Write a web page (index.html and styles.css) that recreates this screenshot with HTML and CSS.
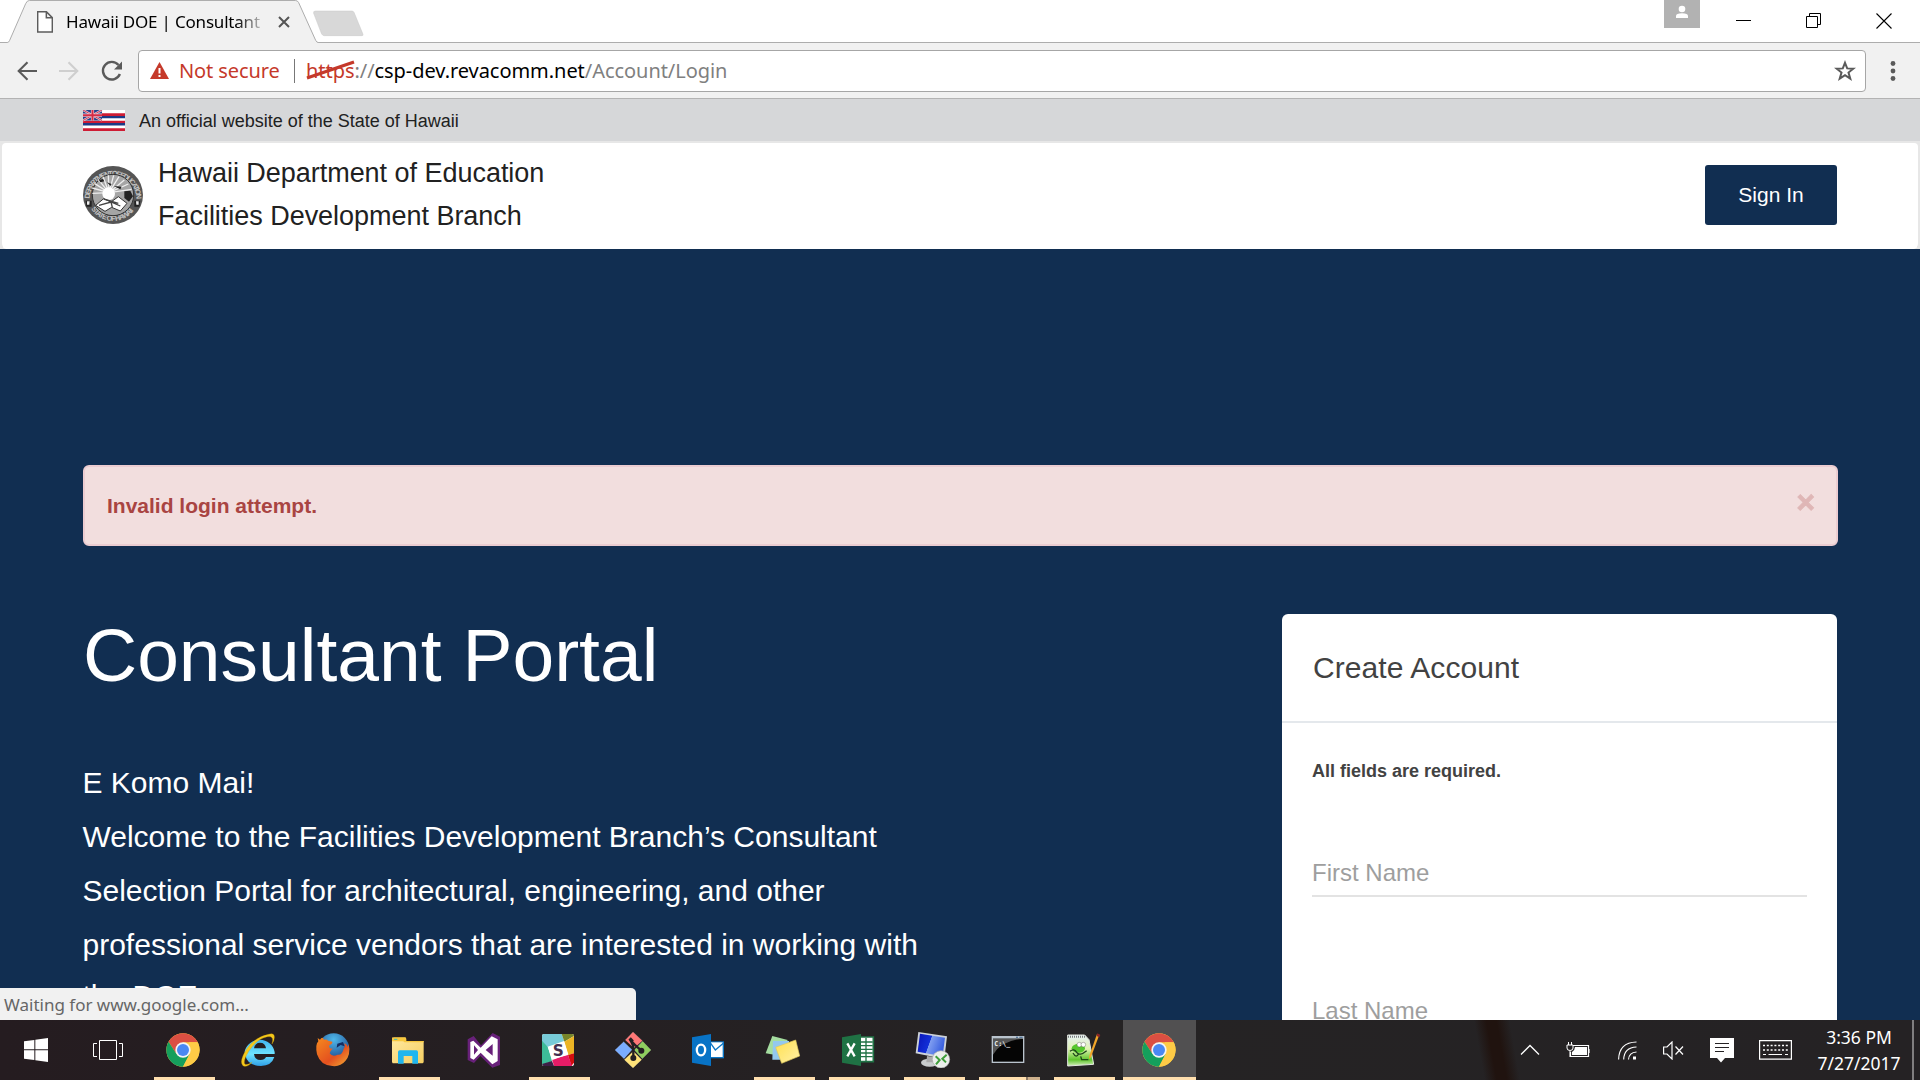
FILE: index.html
```html
<!DOCTYPE html>
<html lang="en">
<head>
<meta charset="utf-8">
<title>Hawaii DOE | Consultant Portal</title>
<link rel="stylesheet" href="styles.css">
</head>
<body>
<svg width="0" height="0" class="defs">
  <defs>
    <linearGradient id="ieBlue" x1="0" y1="0" x2="0" y2="1"><stop offset="0" stop-color="#3fb4f0"/><stop offset=".55" stop-color="#6fe3ff"/><stop offset="1" stop-color="#2f9fe6"/></linearGradient>
    <linearGradient id="foxOrange" x1="0" y1="0" x2="1" y2="1"><stop offset="0" stop-color="#f58a1f"/><stop offset=".6" stop-color="#e4501f"/><stop offset="1" stop-color="#f2b035"/></linearGradient>
    <radialGradient id="foxBlue" cx=".5" cy=".2" r=".8"><stop offset="0" stop-color="#4fb8ea"/><stop offset="1" stop-color="#14337a"/></radialGradient>
    <linearGradient id="folder" x1="0" y1="0" x2="1" y2="1"><stop offset="0" stop-color="#ffe9a0"/><stop offset="1" stop-color="#f5cf62"/></linearGradient>
    <linearGradient id="screen" x1="0" y1="0" x2="1" y2=".3"><stop offset="0" stop-color="#0a14b8"/><stop offset=".5" stop-color="#1230d8"/><stop offset=".52" stop-color="#7f9df0"/><stop offset="1" stop-color="#3c62e0"/></linearGradient>
    <linearGradient id="note" x1="0" y1="0" x2="1" y2="1"><stop offset="0" stop-color="#ffe04e"/><stop offset="1" stop-color="#fff0a8"/></linearGradient>
    <linearGradient id="grass" x1="0" y1="0" x2="0" y2="1"><stop offset="0" stop-color="#e6f0f8"/><stop offset=".45" stop-color="#dff2b0"/><stop offset=".8" stop-color="#5fc52c"/><stop offset="1" stop-color="#d8f0c0"/></linearGradient>
    <symbol id="chrome" viewBox="0 0 108 108">
      <circle cx="54" cy="54" r="50" fill="#fc4"/>
      <path d="M10.700 29A50 50 0 0 1 97.300 29L98 31H54L34 65Z" fill="#db4f42"/>
      <path d="M10.700 29A50 50 0 0 0 54 104L74 66L54 54L34 65Z" fill="#159f5c"/>
      <path d="M98 31A50 50 0 0 1 54 104L74 66L72 31Z" fill="#fecb46"/>
      <circle cx="54" cy="54" r="23" fill="#f4f4f4"/><circle cx="54" cy="54" r="18" fill="#4a88f3"/>
    </symbol>
  </defs>
</svg>

<header class="browser">
  <div class="strip">
    <div class="tab">
      <svg class="tab-shape" width="322" height="43" viewBox="0 0 966 129"><path d="M0 127.500H22Q27 127 29 121L77 11Q81 1.500 88 1.500H886Q893 1.500 896 8L947 121Q950 127.500 955 127.500V129H0Z" fill="#f1f1f1"/><path d="M0 127.500H22Q27 127 29 121L77 11Q81 1.500 88 1.500H886Q893 1.500 896 8L947 121Q950 127.500 955 127.500H966" fill="none" stroke="#adadad" stroke-width="3"/></svg>
      <svg class="favicon" width="16" height="22" viewBox="0 0 48 66"><path d="M2 2H28L46 20V63H2ZM28 3V20H45" fill="#fff" stroke="#5c5c5c" stroke-width="4.500"/></svg>
      <span class="tab-title">Hawaii DOE | Consultant</span>
      <svg class="tab-close" width="12" height="12" viewBox="0 0 12 12"><path d="M1 1L11 11M11 1L1 11" stroke="#555" stroke-width="2"/></svg>
    </div>
    <svg class="new-tab" width="52" height="27" viewBox="0 0 156 81"><path d="M8 3H116Q121 3 123 7L150 73Q151 77 147 77H34Q29 77 26 72L2 10Q0 3 8 3Z" fill="#d8d8d8" stroke="#c8c8c8" stroke-width="1.500"/></svg>
    <div class="window-buttons">
      <svg class="person" width="36" height="28" viewBox="0 0 36 28"><path d="M0 0H36V28H0Z" fill="#b2b2b2"/><circle cx="18" cy="9" r="3.300" fill="#fff"/><path d="M12 18V16Q12 13.300 18 13.300T24 16V18Z" fill="#fff"/></svg>
      <svg width="15" height="15" viewBox="0 0 15 15"><path d="M0 7.500H15" stroke="#000"/></svg>
      <svg width="15" height="15" viewBox="0 0 15 15"><path d="M.5 3.500H11.500V14.500H.5ZM3.500 3V.5H14.500V11.500H12" fill="none" stroke="#000"/></svg>
      <svg width="16" height="16" viewBox="0 0 16 16"><path d="M.5 .5L15.500 15.500M15.500 .5L.5 15.500" stroke="#000" stroke-width="1.100"/></svg>
    </div>
  </div>
  <div class="toolbar">
    <svg class="nav" width="20" height="20" viewBox="0 0 20 20"><path d="M20 10H2M10.500 1.200L1.700 10L10.500 18.800" fill="none" stroke="#5a5a5a" stroke-width="2.100"/></svg>
    <svg class="nav" width="20" height="20" viewBox="0 0 20 20"><path d="M0 10H18M9.500 1.200L18.300 10L9.500 18.800" fill="none" stroke="#cfcfcf" stroke-width="2.100"/></svg>
    <svg class="nav" width="22" height="22" viewBox="0 0 22 22"><path d="M17.500 5A8.800 8.800 0 1 0 18.900 14" fill="none" stroke="#5a5a5a" stroke-width="2.400"/><path d="M21 1.500V9.500H13Z" fill="#5a5a5a"/></svg>
    <div class="omnibox">
      <svg width="19" height="17" viewBox="0 0 19 17"><path d="M9.500 0L19 17H0Z" fill="#c5392a"/><path d="M9.500 6V11.500M9.500 13V15" stroke="#fff" stroke-width="2"/></svg>
      <span class="not-secure">Not secure</span>
      <span class="divider"></span>
      <span class="url"><span class="scheme">https<svg class="strike" width="50" height="20" viewBox="0 0 50 20"><path d="M1 18L48 2" stroke="#c5392a" stroke-width="3.200"/></svg></span><span class="dim">://</span>csp-dev.revacomm.net<span class="dim">/Account/Login</span></span>
      <svg class="star" width="22" height="22" viewBox="0 0 22 22"><path d="M11 2.800L13.200 8.400L19.300 8.700L14.500 12.500L16.300 18.700L11 15.200L5.700 18.700L7.500 12.500L2.700 8.700L8.800 8.400Z" fill="none" stroke="#5a5a5a" stroke-width="2"/></svg>
    </div>
    <svg class="menu" width="6" height="20" viewBox="0 0 6 20"><circle cx="3" cy="2.500" r="2.400"/><circle cx="3" cy="10" r="2.400"/><circle cx="3" cy="17.500" r="2.400"/></svg>
  </div>
</header>

<div class="page">
  <div class="official">
    <svg width="42" height="21" viewBox="0 0 42 21"><path d="M0 0H42V21H0Z" fill="#fff"/><path d="M0 3.300H42V5.900H0ZM0 10.700H42V13.100H0ZM0 18.300H42V21H0Z" fill="#ce1c34"/><path d="M0 5.900H42V8.200H0ZM0 13.100H42V15.600H0Z" fill="#1c3a86"/><path d="M0 0H19V10.500H0Z" fill="#23418c"/><path d="M0 0L19 10.500M19 0L0 10.500" stroke="#e8c8d4" stroke-width="2.200"/><path d="M0 0L19 10.500M19 0L0 10.500" stroke="#cc3350" stroke-width=".9"/><path d="M9.500 0V10.500M0 5.200H19" stroke="#eed3dc" stroke-width="3.200"/><path d="M9.500 0V10.500M0 5.200H19" stroke="#d52b45" stroke-width="2"/></svg>
    <span>An official website of the State of Hawaii</span>
  </div>
  <div class="masthead">
    <svg class="seal" width="60" height="58" viewBox="0 0 180 174">
      <ellipse cx="90" cy="87" rx="90" ry="87" fill="#555"/>
      <path id="arcTop" d="M20 98A70 68 0 1 1 160 98" fill="none"/><path id="arcLow" d="M17 112A76 73 0 0 0 163 112" fill="none"/>
      <g class="seal-text"><text><textPath href="#arcTop" textLength="218">DEPARTMENT OF EDUCATION</textPath></text><text><textPath href="#arcLow" startOffset="18" textLength="150">STATE OF HAWAII</textPath></text></g>
      <circle cx="90" cy="87" r="62" fill="#a5a5a5" stroke="#333" stroke-width="3"/>
      <path d="M78 80L34 52M78 80L46 41M78 80L60 32M78 80L76 28M78 80L92 28M78 80L108 32M78 80L124 42M78 80L136 54M78 80L146 70M78 80L28 66M78 80L28 82" stroke="#eee" stroke-width="4"/>
      <circle cx="77" cy="83" r="19" fill="#fff"/>
      <path d="M48 42L60 39L64 46L52 49ZM72 49L86 54L82 60ZM92 60L116 62L112 70ZM124 76L142 74L150 91L138 107L124 96Z" fill="#222"/>
      <path d="M38 118L62 98L84 108L106 92L132 112L112 135L86 124L66 136Z" fill="#fff" stroke="#333" stroke-width="3"/><path d="M48 118L84 108L112 120M84 108L88 124M62 99L106 112" fill="none" stroke="#444" stroke-width="4"/>
      <path d="M8 104H26V122H10ZM154 104H172L169 122H154Z" fill="#222"/><path d="M12 106H20L19 116H12ZM159 106H167V116H160Z" fill="#eee"/>
    </svg>
    <div class="agency"><div>Hawaii Department of Education</div><div>Facilities Development Branch</div></div>
    <button class="sign-in">Sign In</button>
  </div>
  <main class="hero">
    <div class="alert"><strong>Invalid login attempt.</strong><span class="dismiss">×</span></div>
    <div class="columns">
      <section class="intro">
        <h1>Consultant Portal</h1>
        <p>E Komo Mai!<br>Welcome to the Facilities Development Branch’s Consultant<br>Selection Portal for architectural, engineering, and other<br>professional service vendors that are interested in working with<span class="last-line">the DOE.</span></p>
      </section>
      <section class="card">
        <h2>Create Account</h2>
        <div class="form">
          <p>All fields are required.</p>
          <div class="field">First Name</div>
          <div class="field">Last Name</div>
        </div>
      </section>
    </div>
  </main>
  <div class="status">Waiting for www.google.com...</div>
</div>

<footer class="taskbar">
  <div class="sys"><svg width="24" height="24" viewBox="0 0 72 72"><path d="M0 10L31 6V34H0ZM34 5.500L72 0V34H34ZM0 37H31V66L0 62ZM34 37H72V72L34 66.500Z" fill="#fff"/></svg></div>
  <div class="sys"><svg width="30" height="22" viewBox="0 0 30 22"><path d="M6.500 1.500H23.500V20.500H6.500ZM4 4.500H.5V17.500H4M26 4.500H29.500V17.500H26" fill="none" stroke="#fff"/></svg></div>
  <div class="apps">
    <div class="app open"><svg width="36" height="36"><use href="#chrome"/></svg></div>
    <div class="app"><svg width="36" height="36" viewBox="0 0 108 108"><path d="M14 58A46 45 0 0 1 104 60V66H42Q44 84 62 84Q74 84 78 75H103Q95 101 63 102Q22 101 16 70ZM42 49H78Q76 32 60 32Q45 32 42 49Z" fill="url(#ieBlue)"/><path d="M86 7Q102 2 103 14Q104 24 96 36Q104 10 82 14Q50 20 26 58Q9 86 14 96Q20 101 36 91Q20 108 9 101Q-4 89 20 51Q45 15 86 7Z" fill="#f4c81c" stroke="#d9a400"/></svg></div>
    <div class="app"><svg width="36" height="36" viewBox="0 0 108 108"><circle cx="56" cy="51" r="47" fill="url(#foxBlue)"/><path d="M8 18Q12 22 15 23Q22 12 27 23Q36 21 39 26L52 29Q53 35 43 40Q41 48 45 49L53 50Q45 57 44 64Q52 76 68 68Q82 70 86 50Q91 46 88 34Q98 38 98 46L101 36Q108 68 91 87Q76 105 52 102Q17 101 6 67Q0 37 10 28Z" fill="url(#foxOrange)"/><path d="M67 35L84 30L89 43L77 39L65 47Z" fill="#142d63"/></svg></div>
    <div class="app open"><svg width="36" height="36" viewBox="0 0 108 108"><path d="M6 17H48V27H101V91L98 94H8L6 90Z" fill="url(#folder)"/><path d="M6 17Q8 16 12 16H46L49 20V27H101V31H43L40 28H6Z" fill="#f8c83f"/><path d="M12 22H22" stroke="#4bb" stroke-width="3"/><path d="M24 91V60Q24 55 29 55H79Q84 55 84 60V95H67V72H41V95H24Z" fill="#20b6ee"/></svg></div>
    <div class="app"><svg width="36" height="36" viewBox="0 0 108 108"><path d="M8 22L26 12L48 40L83 3L105 14V99L82 107L46 72L27 93L8 84Z" fill="#68217a"/><path d="M16 30L25 26L47 47L80 13L98 22V87L82 97L47 62L26 83L16 78ZM27 40V68L39 54ZM62 54L83 71V36Z" fill="#fff" fill-rule="evenodd"/></svg></div>
    <div class="app open"><svg width="36" height="36" viewBox="0 0 108 108"><rect x="6" y="6" width="96" height="96" rx="6" fill="#fff"/><path d="M6 12Q6 6 12 6H65L73 29L24 46L6 32Z" fill="#78cbd8"/><path d="M6 26L24 46L36 88L6 98Z" fill="#3dbc98"/><path d="M65 6H96Q102 6 102 12L73 29Z" fill="#77852a"/><path d="M73 29L102 12V64L84 69Z" fill="#ecb424"/><path d="M84 69L102 64V92L94 102Z" fill="#d20e0e"/><path d="M36 82L84 69L96 102H42Z" fill="#e61c67"/><path d="M6 96L36 87L42 102H10Z" fill="#3d1f46"/><path d="M23 44L72 27L85 67L37 84Z" fill="#fff"/><text x="38" y="71" class="slack-s">S</text></svg></div>
    <div class="app"><svg width="36" height="36" viewBox="0 0 108 108"><g stroke="#fff" stroke-opacity=".35"><path d="M54 0L82 26L57 48L31 24Z" fill="#f77"/><path d="M26 29L51 53L27 80L0 54Z" fill="#7aadff"/><path d="M83 28L108 54L82 80L58 54Z" fill="#8fce5f"/><path d="M55 58L80 83L54 108L28 83Z" fill="#ffe279"/></g><path d="M43 20Q57 38 55 55V78M44 20Q55 37 80 56M54 28L45 18" fill="none" stroke="#241f22" stroke-width="7"/><circle cx="55" cy="78" r="9" fill="#241f22"/><circle cx="79" cy="56" r="9" fill="#241f22"/></svg></div>
    <div class="app"><svg width="36" height="36" viewBox="0 0 108 108"><path d="M58 28H102V79H58Z" fill="#0b75c4"/><path d="M60 31H98V75H60Z" fill="#fff"/><path d="M60 31L76 54L100 34" fill="none" stroke="#0b75c4" stroke-width="4"/><path d="M6 16L63 6V102L6 92Z" fill="#0873c6"/><ellipse cx="33" cy="54" rx="12.500" ry="16" fill="none" stroke="#fff" stroke-width="7"/></svg></div>
    <div class="app open"><svg width="36" height="36" viewBox="0 0 108 108"><path d="M22 12L68 24L49 72L2 64Z" fill="#a5dda0"/><path d="M24 27H72V83H22Z" fill="#93c8ef"/><path d="M32 46L92 24L104 72L50 94Z" fill="url(#note)" stroke="#e0c85a" stroke-width="2"/></svg></div>
    <div class="app open"><svg width="36" height="36" viewBox="0 0 108 108"><path d="M58 15H100V89H58Z" fill="#fff" stroke="#207245" stroke-width="5"/><path d="M58 30H98M58 41H98M58 52H98M58 63H98M58 74H98M78 18V87" stroke="#207245" stroke-width="4"/><path d="M6 16L63 6V102L6 92Z" fill="#1f7244"/><path d="M22 34L44 73M44 34L22 73" stroke="#fff" stroke-width="7"/></svg></div>
    <div class="app open"><svg width="36" height="36" viewBox="0 0 108 108"><ellipse cx="44" cy="92" rx="26" ry="12" fill="#c9cccd"/><path d="M36 72L60 76V91H34Z" fill="#aaa"/><path d="M10 0L96 13L88 81L2 64Z" fill="#cdd2d8"/><path d="M15 5L90 17L83 73L8 59Z" fill="url(#screen)"/><circle cx="78" cy="82" r="26" fill="#ecefeb" stroke="#aaa" stroke-width="2"/><path d="M62 73L74 84L63 97M95 68L82 80L93 91" fill="none" stroke="#3f9e3a" stroke-width="6"/></svg></div>
    <div class="app open stacked"><svg width="36" height="36" viewBox="0 0 108 108"><path d="M5 12H103V93H5Z" fill="#b9c3cd"/><path d="M9 20H99V89H9Z" fill="#050505"/><path d="M9 20H99Q33 26 9 68Z" fill="#555"/><path d="M78 14H84V17H78ZM88 14H98V17H88Z" fill="#39608a"/><text x="13" y="41" class="cmd-text">C:\_</text></svg></div>
    <div class="app open"><svg width="36" height="36" viewBox="0 0 108 108"><path d="M8 9H59L72 23L86 97L8 102Z" fill="url(#grass)" stroke="#e4e8e0" stroke-width="3"/><path d="M10 14H62" stroke="#444" stroke-width="6" stroke-dasharray="2 4"/><ellipse cx="40" cy="49" rx="20" ry="13" fill="#56c72e"/><circle cx="43" cy="38" r="7" fill="#fff" stroke="#333"/><circle cx="55" cy="38" r="7" fill="#fff" stroke="#333"/><path d="M15 58Q27 48 35 61T65 56M24 63Q34 81 42 64M47 73L50 83H70" fill="none" stroke="#1d451a" stroke-width="4"/><path d="M103 8L78 75L72 82L73 71L96 6Z" fill="#f2a62a"/><path d="M97 4L106 9L103 16L95 12Z" fill="#8b2425"/></svg></div>
    <div class="app open active"><svg width="36" height="36"><use href="#chrome"/></svg></div>
  </div>
  <div class="tray">
    <svg class="chevron" width="20" height="12" viewBox="0 0 20 12"><path d="M1 10.500L10 1.500L19 10.500" fill="none" stroke="#fff" stroke-width="1.300"/></svg>
    <svg class="battery" width="24" height="18" viewBox="0 0 24 18"><path d="M7 4.500H22.500V15.500H4.500V11M23 8V12" fill="none" stroke="#fff" stroke-width="1.200"/><path d="M9 6H21V14H6V11Q9 9 9 6Z" fill="#fff"/><path d="M1 4V7Q1 9.500 4 9.500T7 7V4ZM2.500 1V4M5.500 1V4M4 10V16" fill="#252224" stroke="#fff"/></svg>
    <svg class="wifi" width="19" height="19" viewBox="0 0 19 19"><path d="M.6 18.500Q1 1.500 18.500 1M5.700 18.500Q6 6.500 18.500 6M10.500 18.500Q11 11.500 18.500 11" fill="none" stroke="#fff" stroke-width="1.100"/><path d="M15 15.500H18V18.500H15Z" fill="#fff"/></svg>
    <svg class="volume" width="21" height="19" viewBox="0 0 21 19"><path d="M.6 6V13H4L9 18V1L4 6ZM12.500 5.500L20 13.500M20 5.500L12.500 13.500" fill="none" stroke="#fff" stroke-width="1.200"/></svg>
    <svg class="message" width="24" height="25" viewBox="0 0 24 25"><path d="M0 0H24V20H15L11 24.500L7 20H0Z" fill="#fff"/><path d="M5 5.500H19M5 9.500H19M5 13.500H14" stroke="#252224" stroke-width="1.100"/></svg>
    <svg class="keyboard" width="33" height="20" viewBox="0 0 33 20"><path d="M.6 .6H32.400V19.200H.6Z" fill="none" stroke="#fff" stroke-width="1.200"/><path d="M4 5.500H30M4 10H30" stroke="#fff" stroke-width="1.300" stroke-dasharray="2 1.800"/><path d="M4 14.500H7M9.500 14.500H23M26 14.500H29" stroke="#fff"/></svg>
    <div class="clock"><span>3:36 PM</span><span>7/27/2017</span></div>
    <span class="peek"></span>
  </div>
</footer>
</body>
</html>
```
FILE: styles.css
```css
* { box-sizing: border-box; }
body {
  margin: 0;
  width: 1920px;
  height: 1080px;
  overflow: hidden;
  display: flex;
  flex-direction: column;
  font-family: "Liberation Sans", Arial, sans-serif;
  background: #112e51;
}
svg { display: block; flex: none; }
.defs { position: absolute; }

/* Browser chrome */
.browser { font-family: "Noto Sans", "Open Sans", sans-serif; flex: none; }
.strip {
  height: 43px;
  display: flex;
  background: #fff;
  border-bottom: 1px solid #adadad;
}
.tab {
  position: relative;
  width: 313px;
  height: 43px;
  display: flex;
  align-items: center;
  padding-left: 37px;
}
.tab-shape { position: absolute; left: 0; top: 0; }
.favicon, .tab-title, .tab-close { position: relative; }
.tab-title {
  margin-left: 13px;
  width: 195px;
  font-size: 17px;
  letter-spacing: -0.2px;
  white-space: nowrap;
  color: #000;
  -webkit-mask-image: linear-gradient(90deg, #000 170px, transparent 202px);
  mask-image: linear-gradient(90deg, #000 170px, transparent 202px);
}
.tab-close { margin-left: 17px; }
.new-tab { margin-top: 10px; }
.window-buttons { margin-left: auto; display: flex; padding-right: 29px; }
.window-buttons svg { margin: 13px 0 0 54px; }
.window-buttons svg:nth-child(2) { margin-right: 1px; }
.window-buttons svg:nth-child(4) { margin-left: 55px; margin-right: -1px; }
.window-buttons svg.person { margin: 0 -18px 0 0; }
.toolbar {
  height: 56px;
  display: flex;
  align-items: center;
  padding: 0 24px 0 17px;
  background: #f1f1f1;
  border-bottom: 1px solid #b3b3b3;
}
.nav { margin-right: 22px; }
.nav + .nav + .nav { margin: 0 15px 0 0; }
.omnibox {
  width: 1728px;
  height: 42px;
  display: flex;
  align-items: center;
  padding: 0 9px 0 11px;
  background: #fff;
  border: 1px solid #a6a6a6;
  border-radius: 4px;
  font-size: 20px;
  white-space: nowrap;
}
.not-secure { margin-left: 10px; width: 115px; color: #c5392a; letter-spacing: -0.1px; }
.divider { width: 1px; height: 24px; background: #777; margin-right: 11px; }
.url { color: #000; letter-spacing: -0.05px; }
.scheme { position: relative; color: #c5392a; }
.strike { position: absolute; left: 0; top: 3px; }
.dim { color: #808080; }
.star { margin-left: auto; }
.menu { margin-left: 24px; fill: #5a5a5a; }

/* Web page */
.page { position: relative; flex: 1; min-height: 0; overflow: hidden; }
.official {
  height: 42px;
  display: flex;
  align-items: center;
  gap: 14px;
  padding-left: 83px;
  background: #d6d7d9;
  color: #212121;
  font-size: 18px;
}
.official span { padding-top: 2px; }
.masthead {
  height: 108px;
  display: flex;
  align-items: center;
  padding: 0 81px;
  background: #fff;
  border: 2px solid #e7e7e7;
  border-bottom: 0;
  border-radius: 6px;
  box-shadow: 0 0 0 6px #e7e7e7;
  clip-path: inset(0);
  color: #212121;
}
.seal { margin-bottom: 2px; }
.seal-text { font-size: 22px; font-weight: bold; fill: #c4c4c4; }
.agency { margin: -3px 0 0 15px; font-size: 27px; line-height: 43px; letter-spacing: -0.03px; }
.sign-in {
  margin: 0 0 2px auto;
  width: 132px;
  height: 60px;
  border: 0;
  border-radius: 3px;
  background: #112e51;
  color: #fff;
  font: 21px "Liberation Sans", Arial, sans-serif;
}
.hero { padding: 216px 82px 0 83px; color: #fff; }
.alert {
  height: 81px;
  display: flex;
  justify-content: space-between;
  padding: 0 21px 0 22px;
  background: #f2dede;
  border: 2px solid #ebccd1;
  border-radius: 6px;
  color: #a94442;
  font-size: 21px;
  line-height: 77px;
}
.dismiss { font-size: 31.5px; font-weight: bold; line-height: 71px; opacity: .25; -webkit-text-stroke: 1px #a94442; }
.columns { display: flex; justify-content: space-between; margin-top: 64px; }
.intro h1 { margin: 0 0 56px; font-size: 75px; font-weight: normal; line-height: 90px; }
.intro p { margin: 0 0 0 -0.5px; font-size: 30px; line-height: 54px; white-space: nowrap; }
.last-line { display: block; margin-top: -3px; }
.card {
  width: 555px;
  height: 700px;
  margin: 4px 1px 0 0;
  background: #fff;
  border-radius: 6px;
  color: #424242;
}
.card h2 {
  margin: 0;
  height: 109px;
  padding: 36px 30px 0 31px;
  border-bottom: 2px solid #e4e8ec;
  font-size: 30px;
  font-weight: normal;
  line-height: 36px;
  letter-spacing: 0.08px;
}
.form { padding: 35px 30px 0; }
.form p { margin: 0 0 70px; font-size: 18px; font-weight: bold; line-height: 27px; }
.field {
  height: 42px;
  margin-bottom: 96px;
  border-bottom: 2px solid #e3e3e3;
  color: #9e9e9e;
  font-size: 24px;
  line-height: 36px;
}
.status {
  position: absolute;
  left: 0;
  bottom: 0;
  width: 636px;
  height: 32px;
  padding-left: 4px;
  background: #f1f1f1;
  border-radius: 0 5px 0 0;
  color: #666;
  font: 17px/34px "Noto Sans", sans-serif;
}

/* Taskbar */
.taskbar {
  flex: none;
  height: 60px;
  display: flex;
  background: linear-gradient(80deg, rgba(32, 19, 15, 0) 1462px, #20130f 1474px, #20130f 1484px, rgba(32, 19, 15, 0) 1497px), linear-gradient(90deg, #251c20, #252324 1100px, #252224);
}
.sys { width: 72px; display: flex; align-items: center; justify-content: center; }
.apps { display: flex; margin-left: 2px; }
.app {
  width: 75px;
  display: flex;
  align-items: center;
  justify-content: center;
  border-bottom: 3px solid transparent;
  padding: 3px 1px 0 0;
}
.app.open { background: linear-gradient(#ffdfae, #ffdfae) 8px 57px / 61px 3px no-repeat; background-origin: border-box; background-clip: border-box; }
.app.stacked { background-image: linear-gradient(90deg, #ffdfae 47px, #8d7965 47px, #8d7965 49px, #cdb08c 49px); }
.app.active { background: linear-gradient(#ffdfae, #ffdfae) 0 57px / 73px 3px no-repeat, #515051; background-origin: border-box; background-clip: border-box; width: 73px; margin-left: 2px; }
.slack-s { font: bold 46px "DejaVu Sans", sans-serif; fill: #443050; }
.cmd-text { font: bold 20px "DejaVu Sans Mono", monospace; fill: #eee; }
.tray { margin-left: auto; display: flex; align-items: center; }
.chevron { margin-right: 26px; }
.battery { margin-right: 28px; }
.wifi { margin-right: 26px; }
.volume { margin-right: 26px; }
.message { margin-right: 25px; }
.clock {
  width: 104px;
  margin: 0 1px 0 15px;
  display: flex;
  flex-direction: column;
  align-items: center;
  color: #fff;
  font: 17.5px/26px "Noto Sans", sans-serif;
}
.peek { width: 2px; height: 60px; margin-right: 6px; background: #807e7f; }
```
